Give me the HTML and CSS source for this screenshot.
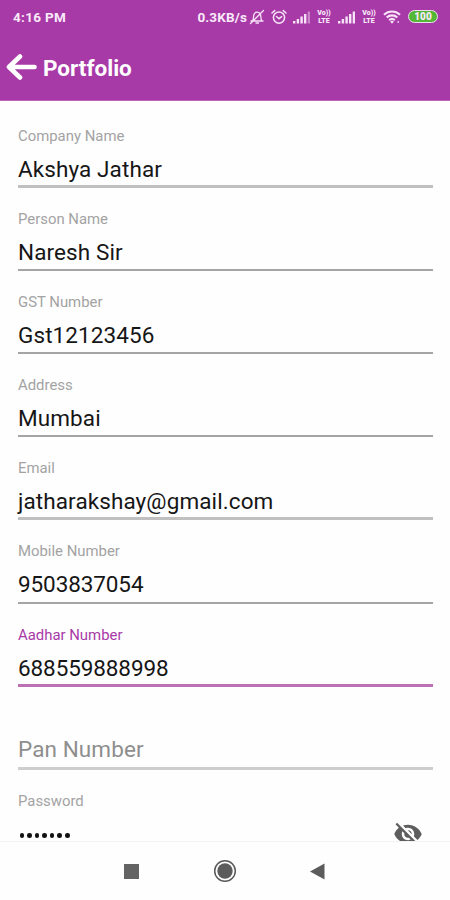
FILE: index.html
```html
<!DOCTYPE html>
<html lang="en">
<head>
  <meta charset="UTF-8" />
  <meta name="viewport" content="width=device-width, initial-scale=1.0"/>
  <title>Portfolio</title>
  <link rel="stylesheet" href="styles.css">
</head>
<body>
  <div class="screen">
    <header class="header">
      <div class="status-bar">
        <span class="clock">4:16 PM</span>
        <div class="status-icons">
          <span class="speed">0.3KB/s</span>
          <svg class="bell" width="16" height="16" viewBox="0 0 16 16" fill="none" stroke="#f6e3f7" stroke-width="1.3" stroke-linecap="round">
            <path d="M2 12h12M3.700 11.700c1-1.200.6-4.400 1.200-6.200C6 2.400 10.400 2.400 11.500 5.500c.6 1.800.2 5 1.200 6.200M7 14h2.500M14.500 1.500L1.500 14.500"/>
          </svg>
          <svg class="alarm" width="16" height="16" viewBox="0 0 16 16" fill="none" stroke="#f6e3f7" stroke-width="1.5" stroke-linecap="round">
            <circle cx="8" cy="8.600" r="5.600"/>
            <path d="M1 4l2.700-2.400M15 4l-2.700-2.400M5.500 7.500L8 9.700l2.600-2"/>
          </svg>
          <svg class="signal" width="18" height="14" viewBox="0 0 18 14" fill="#f6e3f7">
            <path d="M0 11h2.400v2.500H0zM3.700 9h2.400v4.500H3.700zM7.400 6.500h2.400v7H7.400zM11 4h2.400v9.500H11z"/>
            <path d="M14.700 1.500H17v12h-2.300z" opacity=".45"/>
          </svg>
          <span class="volte"><b>Vo))</b><b>LTE</b></span>
          <svg class="signal" width="18" height="14" viewBox="0 0 18 14" fill="#f6e3f7">
            <path d="M0 11h2.400v2.500H0zM3.700 9h2.400v4.500H3.700zM7.400 6.500h2.400v7H7.400zM11 4h2.400v9.500H11zM14.700 1.500H17v12h-2.300z"/>
          </svg>
          <span class="volte"><b>Vo))</b><b>LTE</b></span>
          <svg class="wifi" width="18" height="14" viewBox="0 0 18 14" fill="none" stroke="#f6e3f7" stroke-width="2.100">
            <path d="M1 4.700c4.600-4.200 11.400-4.200 16 0M3.700 7.500c3-2.800 7.600-2.800 10.600 0M6.200 10.100c1.700-1.500 3.900-1.500 5.600 0"/>
            <path d="M9 13.700l-1.900-2.200q1.900-1.300 3.800 0z" fill="#f6e3f7" stroke="none"/>
            <path d="M14.500 12h1.500" stroke-width="1.500"/>
          </svg>
          <span class="battery"><b>100</b></span>
        </div>
      </div>
      <div class="title-bar">
        <svg class="back" width="32" height="28" viewBox="0 0 32 28" fill="none" stroke="#fff" stroke-width="4.600" stroke-linecap="round" stroke-linejoin="round">
          <path d="M14 3.500L3 14l11 10.500M3.500 14H28.500"/>
        </svg>
        <h1>Portfolio</h1>
      </div>
    </header>

    <main class="form">
      <div class="field soft"><div class="label">Company Name</div><div class="value"><span>Akshya Jathar</span></div></div>
      <div class="field"><div class="label">Person Name</div><div class="value"><span>Naresh Sir</span></div></div>
      <div class="field"><div class="label">GST Number</div><div class="value"><span>Gst12123456</span></div></div>
      <div class="field"><div class="label">Address</div><div class="value"><span>Mumbai</span></div></div>
      <div class="field soft"><div class="label">Email</div><div class="value"><span>jatharakshay@gmail.com</span></div></div>
      <div class="field number"><div class="label">Mobile Number</div><div class="value"><span>9503837054</span></div></div>
      <div class="field number active"><div class="label">Aadhar Number</div><div class="value"><span>688559888998</span></div></div>
      <div class="field empty"><div class="value"><span>Pan Number</span></div></div>
      <div class="field password">
        <div class="label">Password</div>
        <div class="value">
          <span class="dots"><i></i><i></i><i></i><i></i><i></i><i></i><i></i></span>
          <svg class="eye" width="30" height="30" viewBox="0 0 24 24" fill="#5e5e5e">
            <path d="M12 7c2.760 0 5 2.240 5 5 0 .65-.13 1.260-.36 1.830l2.920 2.920c1.510-1.260 2.700-2.890 3.430-4.750-1.730-4.390-6-7.500-11-7.500-1.400 0-2.740.25-3.980.7l2.160 2.160C10.740 7.130 11.350 7 12 7zM2 4.270l2.280 2.280.46.46C3.080 8.300 1.780 10.020 1 12c1.730 4.390 6 7.500 11 7.500 1.550 0 3.030-.3 4.380-.84l.42.42L19.730 22 21 20.730 3.270 3 2 4.270zM7.530 9.800l1.550 1.550c-.05.21-.08.43-.08.65 0 1.660 1.340 3 3 3 .22 0 .44-.03.65-.08l1.550 1.550c-.67.33-1.410.53-2.200.53-2.760 0-5-2.240-5-5 0-.79.2-1.530.53-2.200zm4.310-.78l3.150 3.150.02-.16c0-1.660-1.340-3-3-3l-.17.01z"/>
          </svg>
        </div>
      </div>
    </main>

    <nav class="nav-bar">
      <svg width="15" height="15" viewBox="0 0 15 15"><path d="M0 0h15v15H0z" fill="#636363"/></svg>
      <svg width="24" height="24" viewBox="0 0 24 24">
        <circle cx="12" cy="12" r="10.300" fill="none" stroke="#5a5a5a" stroke-width="1.500"/>
        <circle cx="12" cy="12" r="7.700" fill="#5c5c5c"/>
      </svg>
      <svg width="15" height="17" viewBox="0 0 15 17"><path d="M0 8.500L14.500 .5v16z" fill="#5c5c5c"/></svg>
    </nav>
  </div>
</body>
</html>
```
FILE: styles.css
```css
* {
  box-sizing: border-box;
}

body {
  margin: 0;
  font-family: Roboto, sans-serif;
  background: #fefefe;
}

.screen {
  width: 450px;
  height: 900px;
  display: flex;
  flex-direction: column;
  overflow: hidden;
}

.header {
  flex: none;
  height: 101px;
  background: #a83aa7;
  border-bottom: 1px solid #b965b8;
  color: #fff;
}

.status-bar {
  height: 33px;
  padding: 0 12px 0 13px;
  display: flex;
  justify-content: space-between;
  align-items: center;
  font-size: 13.500px;
  font-weight: 700;
  color: #f9e9fa;
}

.clock {
  letter-spacing: 0.3px;
}

.status-icons {
  display: flex;
  align-items: center;
}

.speed {
  margin-right: 2px;
  letter-spacing: 0.15px;
}

.bell {
  margin-right: 6px;
}

.alarm {
  margin-right: 6px;
}

.signal {
  margin-right: 5px;
}

.volte {
  width: 16px;
  margin-right: 6px;
  font-size: 7px;
  text-align: center;
}

.volte b {
  display: block;
  height: 8px;
  line-height: 8px;
}

.wifi {
  margin-right: 7px;
}

.battery {
  width: 30px;
  height: 13px;
  border: 1.500px solid #eedcf0;
  border-radius: 7px;
  background: #54b836;
  font-size: 10px;
  line-height: 11px;
  text-align: center;
}

.title-bar {
  height: 67px;
  padding-left: 6px;
  display: flex;
  align-items: center;
}

h1 {
  margin: 2px 0 0 5px;
  font-size: 22.500px;
  font-weight: 700;
}

.form {
  flex: 1;
  min-height: 0;
  overflow: hidden;
  padding: 3.500px 17px 0 18px;
}

.field {
  height: 83.200px;
  padding-top: 22px;
  border-bottom: 2px solid #a5a5a5;
}

.soft {
  border-bottom: 3px solid #c0c0c0;
}

.label {
  height: 18px;
  line-height: 18px;
  font-size: 14.900px;
  color: #a3a3a3;
}

.value {
  height: 34px;
  padding-top: 11px;
  line-height: 26px;
  font-size: 22.500px;
  letter-spacing: 0.1px;
  color: #161616;
}

.number .value {
  letter-spacing: -0.1px;
}

.active {
  border-bottom: 3px solid #bb72b5;
}

.active .label {
  color: #a83aa7;
}

.empty {
  padding-top: 38px;
  border-bottom: 3px solid #cecece;
}

.empty .value {
  color: #8e8e8e;
}

.password .value {
  height: 40px;
  padding: 9px 10px 0 1.500px;
  display: flex;
  justify-content: space-between;
}

.dots {
  display: flex;
  gap: 3px;
  padding-top: 14px;
}

.dots i {
  width: 4.600px;
  height: 4.600px;
  border-radius: 50%;
  background: #111;
}

.nav-bar {
  flex: none;
  height: 59px;
  padding: 0 125px 0 124px;
  border-top: 1px solid #f3f3f3;
  display: flex;
  justify-content: space-between;
  align-items: center;
}
```
